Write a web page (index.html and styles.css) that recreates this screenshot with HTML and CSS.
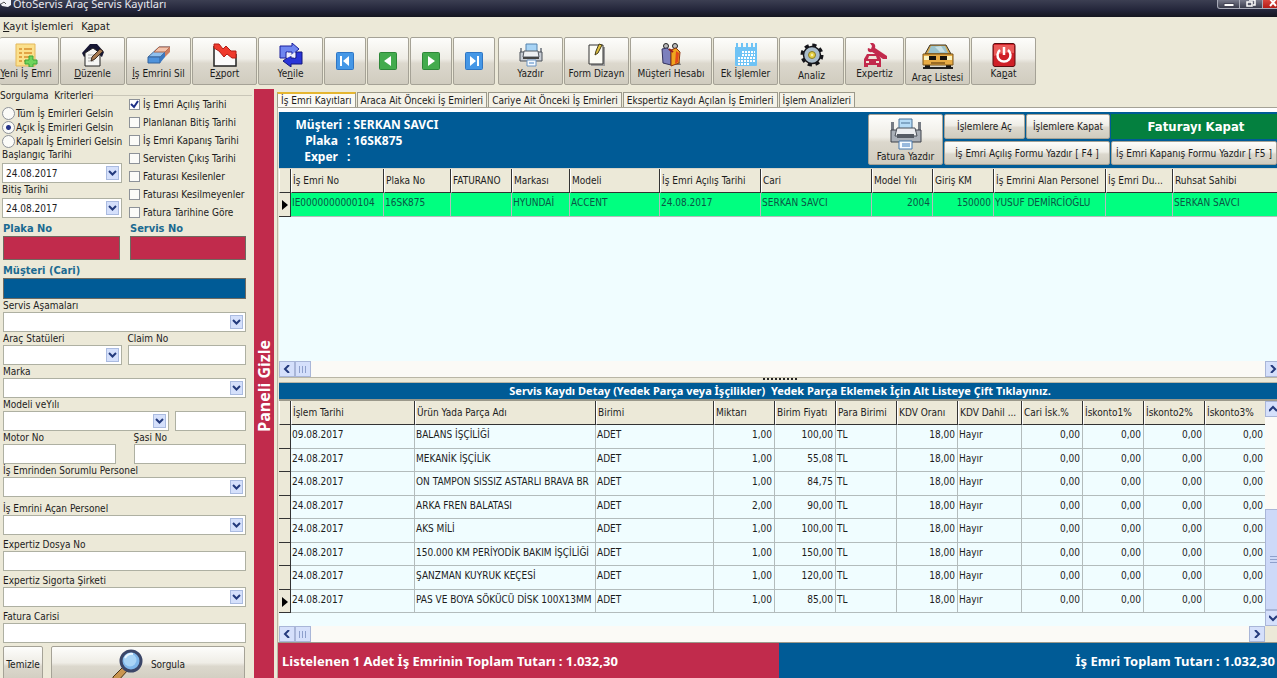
FILE: index.html
```
<!DOCTYPE html>
<html lang="tr">
<head>
    <meta charset="UTF-8">
    <meta name="viewport" content="width=device-width, initial-scale=1.0">
    <title>OtoServis Araç Servis Kayıtları</title>
    <link rel="stylesheet" href="styles.css">
</head>
<body>
    <header class="titlebar">
        <svg class="title-icon" width="12" height="8" viewBox="0 0 12 8"><path d="M0 0h11v5l-3 2-6-1-2-3z" fill="#f4f4f8"/><path d="M1 4l3-2 2 2" stroke="#555" fill="none"/></svg>
        <span class="title-text">OtoServis Araç Servis Kayıtları</span>
        <div class="window-buttons">
            <button class="win-btn" aria-label="Simge durumuna küçült"><svg width="22" height="8" viewBox="0 0 22 8"><path d="M6 3.500h10v3H6z" fill="#fff" stroke="#445"/></svg></button>
            <button class="win-btn" aria-label="Önceki boyut"><svg width="22" height="8" viewBox="0 0 22 8"><path d="M9 0h6v5h-2M7 2h5v4H7z" fill="none" stroke="#fff" stroke-width="1.500"/></svg></button>
            <button class="win-btn close" aria-label="Pencereyi kapat"><svg width="18" height="8" viewBox="0 0 18 8"><path d="M7 -1l6 7M13 -1l-6 7" stroke="#fff" stroke-width="2"/></svg></button>
        </div>
    </header>

    <nav class="menubar">
        <a href="#"><u>K</u>ayıt İşlemleri</a>
        <a href="#">K<u>a</u>pat</a>
    </nav>

    <div class="toolbar">
        <button class="tool first">
            <svg width="24" height="24" viewBox="0 0 24 24"><path d="M2 1h19v22H2z" fill="#fbe08c" stroke="#e3b75a"/><path d="M5 6h3M10 6h8M5 10h3M10 10h8M5 14h3M10 14h6M5 18h3M10 18h3" stroke="#d98f2e" stroke-width="1.500"/><path d="M15 13h4v4h4v4h-4v3h-4v-3h-4v-4h4z" fill="#6fd45c" stroke="#3ba53a"/></svg>
            <span><u>Y</u>eni İş Emri</span>
        </button>
        <button class="tool w64">
            <svg width="24" height="24" viewBox="0 0 24 24"><path d="M1 10L9 1h7l7 8-2 5-9-7-9 7z" fill="#171733"/><path d="M4 10l8-5 7 5v13H4z" fill="#f6f6f4" stroke="#222"/><path d="M7 12h6M7 15h8M7 18h6" stroke="#aaa"/><path d="M10 18l1-4 8-8 3 2-8 8z" fill="#a77b52" stroke="#3a2a20"/></svg>
            <span><u>D</u>üzenle</span>
        </button>
        <button class="tool w64">
            <svg width="24" height="24" viewBox="0 0 24 24"><path d="M1 14L12 4h11L13 14z" fill="#8fc0ee" stroke="#4b6f9c"/><path d="M7 9l5-5h11l-5 5z" fill="#f3c3ac" stroke="#a8654b"/><path d="M1 14h12v6H1z" fill="#4f93dc" stroke="#35629b"/><path d="M13 14l5-5v5l-5 6z" fill="#3c78c0"/><path d="M18 9l5-5v5l-5 5z" fill="#cf7f62"/></svg>
            <span><u>İ</u>ş Emrini Sil</span>
        </button>
        <button class="tool w64">
            <svg width="24" height="24" viewBox="0 0 24 24"><path d="M1 3v20h22V11" fill="#fbfbfb" stroke="#222" stroke-width="1.500"/><path d="M1 1h5l4 5 3-3 5 5h5v7h-4l-5-4-3 3-5-6-5-3z" fill="#ef3a2c" stroke="#b31c14"/></svg>
            <span>E<u>x</u>port</span>
        </button>
        <button class="tool w64">
            <svg width="24" height="24" viewBox="0 0 24 24"><path d="M1 15V3h12V0l7 6-7 6V9H7v6z" fill="#6f86f0" stroke="#1a1f9c"/><path d="M23 9v12H12v3l-8-6 8-6v3h5V9z" fill="#2a35d8" stroke="#12167c"/><path d="M8 9l4 3 4-3v6l-4-2-4 2z" fill="#eef"/></svg>
            <span>Ye<u>n</u>ile</span>
        </button>
        <button class="tool nav" aria-label="İlk kayıt"><svg width="18" height="18" viewBox="0 0 18 18"><rect x=".5" y=".5" width="17" height="17" rx="1" fill="#4597e6" stroke="#2f76c4"/><path d="M4 4h2v10H4zM13 4v10L7 9z" fill="#fff"/></svg></button>
        <button class="tool nav" aria-label="Önceki kayıt"><svg width="18" height="18" viewBox="0 0 18 18"><rect x=".5" y=".5" width="17" height="17" rx="1" fill="#43ab4d" stroke="#2d8738"/><path d="M12 4v10L5 9z" fill="#fff"/></svg></button>
        <button class="tool nav" aria-label="Sonraki kayıt"><svg width="18" height="18" viewBox="0 0 18 18"><rect x=".5" y=".5" width="17" height="17" rx="1" fill="#43ab4d" stroke="#2d8738"/><path d="M6 4v10l7-5z" fill="#fff"/></svg></button>
        <button class="tool nav last" aria-label="Son kayıt"><svg width="18" height="18" viewBox="0 0 18 18"><rect x=".5" y=".5" width="17" height="17" rx="1" fill="#4597e6" stroke="#2f76c4"/><path d="M12 4h2v10h-2zM5 4v10l6-5z" fill="#fff"/></svg></button>
        <button class="tool w64">
            <svg width="24" height="24" viewBox="0 0 24 24"><path d="M1 5h2v5H1zM21 5h2v5h-2z" fill="#8b9097"/><path d="M7 1h11v9H7z" fill="#a8d4f5" stroke="#5482ad"/><path d="M1 9h22v9H1z" fill="#c9ced6" stroke="#4b5058"/><path d="M5 8h14l1 6H4z" fill="#eef0f3" stroke="#555a63"/><path d="M4 15h16" stroke="#444" stroke-width="2"/><path d="M8 17h9v6H8z" fill="#f5faff" stroke="#6a93c0"/><path d="M10 20h5" stroke="#4a84c4"/></svg>
            <span>Yazdır</span>
        </button>
        <button class="tool w64">
            <svg width="24" height="24" viewBox="0 0 24 24"><path d="M6 4h14v19H6z" fill="#999"/><path d="M4 2h14v19H4z" fill="#fcfcf6" stroke="#333"/><path d="M10 12l1-4 3-7 3 1-4 8z" fill="#e2c443" stroke="#443c18"/></svg>
            <span>Form Dizayn</span>
        </button>
        <button class="tool w80">
            <svg width="24" height="24" viewBox="0 0 24 24"><path d="M15 22l7 0-2-4z" fill="#777"/><circle cx="7" cy="3" r="2.500" fill="#bbb" stroke="#222"/><circle cx="16" cy="3" r="2.500" fill="#bbb" stroke="#222"/><path d="M3 6l5-1 4 3v14l-8-2z" fill="#7c80bd" stroke="#33335f"/><path d="M12 7l5-2 4 4-1 11-8 3z" fill="#f0a51e" stroke="#8d3510"/><path d="M17 8l3 2-1 9-3 2z" fill="#e34a1c"/><path d="M10 6l4 3" stroke="#9c1d1d" stroke-width="2"/></svg>
            <span>Müşteri Hesabı</span>
        </button>
        <button class="tool w64">
            <svg width="24" height="24" viewBox="0 0 24 24"><path d="M1 4h22v18a1 1 0 0 1-1 1H2a1 1 0 0 1-1-1z" fill="#6fc3f5"/><path d="M3 0v5M8 0v5M13 0v5M18 0v5M22 0v5" stroke="#6fc3f5" stroke-width="2"/><path d="M8 9h13M8 12h13M4 15h17M4 18h17M4 21h12" stroke="#fff" stroke-width="2" stroke-dasharray="2 1"/></svg>
            <span>Ek İşlemler</span>
        </button>
        <button class="tool w64">
            <svg width="24" height="24" viewBox="0 0 24 24"><circle cx="12" cy="12" r="9.500" fill="none" stroke="#15151a" stroke-width="4" stroke-dasharray="4 3.460"/><circle cx="12" cy="12" r="8.500" fill="#a9bccb" stroke="#15151a" stroke-width="1.500"/><circle cx="12" cy="12" r="3.500" fill="#e5cf42" stroke="#8b7c24"/><circle cx="12" cy="12" r="1.200" fill="#f8f0b0"/></svg>
            <span class="gap-1">Analiz</span>
        </button>
        <button class="tool w58">
            <svg width="24" height="24" viewBox="0 0 24 24"><path d="M7 0c4-1 6 2 5 5l12 8v3h-4L9 9C6 10 4 8 5 5l3 1 1-3z" fill="#c22a4c"/><path d="M4 11h11l3 5v8h-4v-2H5v2H1v-8z" fill="#c22a4c"/><path d="M6 13h7l1 3H5z" fill="#eee6da"/><path d="M3 19h3M13 19h3" stroke="#eee6da" stroke-width="2"/></svg>
            <span>Expertiz</span>
        </button>
        <button class="tool w64">
            <svg width="32" height="26" viewBox="0 0 32 26"><path d="M1 24h30v2H1z" fill="#222"/><path d="M3 19h5v6H3zM24 19h5v6h-5z" fill="#171717"/><path d="M8 2h16l5 9H3z" fill="#d7a64a" stroke="#3b3526"/><path d="M9 3h14l3 7H6z" fill="#9cc3cb"/><path d="M13 4l5 5h5l-4-6z" fill="#c9e0e2"/><path d="M1 11h30v11H1z" fill="#e8ac45" stroke="#7a5418"/><path d="M7 13h18v4H7z" fill="#16130c"/><path d="M14 13h4v4h-4z" fill="#e8ac45"/><path d="M2 13h5v4H2zM25 13h5v4h-5z" fill="#fbf3bf"/><path d="M9 20h14" stroke="#9b6b23" stroke-width="2"/></svg>
            <span class="gap-1">Araç Listesi</span>
        </button>
        <button class="tool w64">
            <svg width="24" height="24" viewBox="0 0 24 24"><rect x="1" y=".5" width="22" height="23" rx="2" fill="#cf2027" stroke="#5b0d10"/><path d="M2 2h20v8Q12 8 2 13z" fill="#ea5a58"/><path d="M8 7a6.500 6.500 0 1 0 8 0" fill="none" stroke="#fff" stroke-width="2.500"/><path d="M12 4v8" stroke="#fff" stroke-width="2.500"/></svg>
            <span>Ka<u>p</u>at</span>
        </button>
    </div>

    <div class="workspace">
        <form class="search-panel">
            <fieldset class="criteria">
                <legend>Sorgulama&nbsp; Kriterleri</legend>
                <div class="criteria-left">
                    <label class="radio"><input type="radio" name="durum">Tüm İş Emirleri Gelsin</label>
                    <label class="radio"><input type="radio" name="durum" checked>Açık İş Emirleri Gelsin</label>
                    <label class="radio"><input type="radio" name="durum">Kapalı İş Emirleri Gelsin</label>
                    <div class="field date">
                        <label for="baslangic">Başlangıç Tarihi</label>
                        <select id="baslangic"><option>24.08.2017</option></select>
                    </div>
                    <div class="field date">
                        <label for="bitis">Bitiş Tarihi</label>
                        <select id="bitis"><option>24.08.2017</option></select>
                    </div>
                </div>
                <div class="criteria-right">
                    <label class="check"><input type="checkbox" checked>İş Emri Açılış Tarihi</label>
                    <label class="check"><input type="checkbox">Planlanan Bitiş Tarihi</label>
                    <label class="check"><input type="checkbox">İş Emri Kapanış Tarihi</label>
                    <label class="check"><input type="checkbox">Servisten Çıkış Tarihi</label>
                    <label class="check"><input type="checkbox">Faturası Kesilenler</label>
                    <label class="check"><input type="checkbox">Faturası Kesilmeyenler</label>
                    <label class="check"><input type="checkbox">Fatura Tarihine Göre</label>
                </div>
            </fieldset>

            <div class="row key-row">
                <div class="key-field"><label for="plaka">Plaka No</label><input id="plaka" class="red" type="text"></div>
                <div class="key-field"><label for="servis">Servis No</label><input id="servis" class="red" type="text"></div>
            </div>
            <div class="key-field wide"><label for="musteri">Müşteri (Cari)</label><input id="musteri" class="blue" type="text"></div>

            <div class="fields">
                <div class="field"><label for="asama">Servis Aşamaları</label><select id="asama"><option></option></select></div>
                <div class="row even">
                    <div class="field"><label for="statu">Araç Statüleri</label><select id="statu"><option></option></select></div>
                    <div class="field"><label for="claim">Claim No</label><input id="claim" type="text"></div>
                </div>
                <div class="field"><label for="marka">Marka</label><select id="marka"><option></option></select></div>
                <div class="row model">
                    <div class="field"><label for="model">Modeli veYılı</label><select id="model"><option></option></select></div>
                    <div class="field"><input id="yil" type="text" aria-label="Yılı"></div>
                </div>
                <div class="row motor">
                    <div class="field"><label for="motor">Motor No</label><input id="motor" type="text"></div>
                    <div class="field"><label for="sasi">Şasi No</label><input id="sasi" type="text"></div>
                </div>
                <div class="field"><label for="sorumlu">İş Emrinden Sorumlu Personel</label><select id="sorumlu"><option></option></select></div>
            </div>
            <div class="fields loose">
                <div class="field"><label for="acan">İş Emrini Açan Personel</label><select id="acan"><option></option></select></div>
                <div class="field"><label for="dosya">Expertiz Dosya No</label><input id="dosya" type="text"></div>
                <div class="field"><label for="sigorta">Expertiz Sigorta Şirketi</label><select id="sigorta"><option></option></select></div>
                <div class="field"><label for="fatura">Fatura Carisi</label><input id="fatura" type="text"></div>
            </div>

            <div class="actions">
                <button type="reset" class="btn clear">Temizle</button>
                <button type="button" class="btn query">
                    <svg width="32" height="32" viewBox="0 0 32 32"><path d="M2 28L13 17l4 4L7 32H2z" fill="#c99550" stroke="#4a3216"/><circle cx="20" cy="12" r="10" fill="#7eb6ea" stroke="#3b4668" stroke-width="3"/><circle cx="19" cy="11" r="6.500" fill="#a9d4f6"/><path d="M14 9q3-5 8-4" stroke="#eaf6ff" stroke-width="2" fill="none"/></svg>
                    Sorgula
                </button>
            </div>
        </form>

        <button class="hide-panel"><span>Paneli Gizle</span></button>

        <main class="content">
            <div class="tabs">
                <button class="tab active">İş Emri Kayıtları</button>
                <button class="tab">Araca Ait Önceki İş Emirleri</button>
                <button class="tab">Cariye Ait Önceki İş Emirleri</button>
                <button class="tab">Ekspertiz Kaydı Açılan İş Emirleri</button>
                <button class="tab">İşlem Analizleri</button>
            </div>

            <div class="page">
                <section class="order-head">
                    <dl class="order-info">
                        <dt>Müşteri</dt><dd>: SERKAN SAVCI</dd>
                        <dt class="short">Plaka</dt><dd>: 16SK875</dd>
                        <dt class="short">Exper</dt><dd>:</dd>
                    </dl>
                    <div class="order-buttons">
                        <button class="btn print">
                            <svg width="32" height="32" viewBox="0 0 32 32"><path d="M1 4h3v10H1zM28 4h3v10h-3z" fill="#777c84"/><path d="M9 1h13v12H9z" fill="#b6dcf7" stroke="#4d7396"/><path d="M11 5h9" stroke="#4d7396"/><path d="M1 12h30v12H1z" fill="#aab0b8" stroke="#3e434a"/><path d="M7 10h18l2 8H5z" fill="#eceef1" stroke="#4b5058"/><path d="M7 16h17v4H7z" fill="#555b64"/><path d="M9 23h13v8H9z" fill="#f6fbff" stroke="#4978ac"/><path d="M12 26h8M12 28h8" stroke="#3a79bd"/></svg>
                            <span>Fatura Yazdır</span>
                        </button>
                        <button class="btn open">İşlemlere Aç</button>
                        <button class="btn shut">İşlemlere Kapat</button>
                        <button class="close-invoice">Faturayı Kapat</button>
                        <button class="btn form-open">İş Emri Açılış Formu Yazdır [ F4 ]</button>
                        <button class="btn form-close">İş Emri Kapanış Formu Yazdır [ F5 ]</button>
                    </div>
                </section>

                <section class="orders">
                    <table class="grid orders-table">
                        <colgroup><col class="c12"><col class="c92"><col class="c67"><col class="c61"><col class="c58"><col class="c90"><col class="c101"><col class="c111"><col class="c61"><col class="c61"><col class="c112"><col class="c67"><col></colgroup>
                        <thead>
                            <tr><th></th><th>İş Emri No</th><th>Plaka No</th><th>FATURANO</th><th>Markası</th><th>Modeli</th><th>İş Emri Açılış Tarihi</th><th>Cari</th><th>Model Yılı</th><th>Giriş KM</th><th>İş Emrini Alan Personel</th><th>İş Emri Du...</th><th>Ruhsat Sahibi</th></tr>
                        </thead>
                        <tbody>
                            <tr><td class="mark"><svg width="6" height="10" viewBox="0 0 6 10"><path d="M0 0l6 5-6 5z"/></svg></td><td>IE0000000000104</td><td>16SK875</td><td></td><td>HYUNDAİ</td><td>ACCENT</td><td>24.08.2017</td><td>SERKAN SAVCI</td><td class="num">2004</td><td class="num">150000</td><td>YUSUF DEMİRCİOĞLU</td><td></td><td>SERKAN SAVCI</td></tr>
                        </tbody>
                    </table>
                </section>
                <div class="hscroll">
                    <button class="sb left" aria-label="Sola kaydır"></button><span class="thumb"></span><button class="sb right" aria-label="Sağa kaydır"></button>
                </div>

                <div class="splitter"><span></span></div>
                <h2 class="banner">Servis Kaydı Detay (Yedek Parça veya İşçilikler)&nbsp; Yedek Parça Eklemek İçin Alt Listeye Çift Tıklayınız.</h2>

                <section class="details">
                    <div class="details-main">
                        <table class="grid details-table">
                            <colgroup><col class="c12"><col class="c123"><col class="c181"><col class="c118"><col class="c61"><col class="c61"><col class="c61"><col class="c61"><col class="c64"><col class="c61"><col class="c61"><col class="c61"><col></colgroup>
                            <thead>
                                <tr><th></th><th>İşlem Tarihi</th><th>Ürün Yada Parça Adı</th><th>Birimi</th><th>Miktarı</th><th>Birim Fiyatı</th><th>Para Birimi</th><th>KDV Oranı</th><th>KDV Dahil ...</th><th>Cari İsk.%</th><th>İskonto1%</th><th>İskonto2%</th><th>İskonto3%</th></tr>
                            </thead>
                            <tbody>
                                <tr><td class="mark"></td><td>09.08.2017</td><td>BALANS İŞÇİLİĞİ</td><td>ADET</td><td class="num">1,00</td><td class="num">100,00</td><td>TL</td><td class="num">18,00</td><td>Hayır</td><td class="num">0,00</td><td class="num">0,00</td><td class="num">0,00</td><td class="num">0,00</td></tr>
                                <tr><td class="mark"></td><td>24.08.2017</td><td>MEKANİK İŞÇİLİK</td><td>ADET</td><td class="num">1,00</td><td class="num">55,08</td><td>TL</td><td class="num">18,00</td><td>Hayır</td><td class="num">0,00</td><td class="num">0,00</td><td class="num">0,00</td><td class="num">0,00</td></tr>
                                <tr><td class="mark"></td><td>24.08.2017</td><td>ON TAMPON SISSIZ ASTARLI BRAVA BR</td><td>ADET</td><td class="num">1,00</td><td class="num">84,75</td><td>TL</td><td class="num">18,00</td><td>Hayır</td><td class="num">0,00</td><td class="num">0,00</td><td class="num">0,00</td><td class="num">0,00</td></tr>
                                <tr><td class="mark"></td><td>24.08.2017</td><td>ARKA FREN BALATASI</td><td>ADET</td><td class="num">2,00</td><td class="num">90,00</td><td>TL</td><td class="num">18,00</td><td>Hayır</td><td class="num">0,00</td><td class="num">0,00</td><td class="num">0,00</td><td class="num">0,00</td></tr>
                                <tr><td class="mark"></td><td>24.08.2017</td><td>AKS MİLİ</td><td>ADET</td><td class="num">1,00</td><td class="num">100,00</td><td>TL</td><td class="num">18,00</td><td>Hayır</td><td class="num">0,00</td><td class="num">0,00</td><td class="num">0,00</td><td class="num">0,00</td></tr>
                                <tr><td class="mark"></td><td>24.08.2017</td><td>150.000 KM PERİYODİK BAKIM İŞÇİLİĞİ</td><td>ADET</td><td class="num">1,00</td><td class="num">150,00</td><td>TL</td><td class="num">18,00</td><td>Hayır</td><td class="num">0,00</td><td class="num">0,00</td><td class="num">0,00</td><td class="num">0,00</td></tr>
                                <tr><td class="mark"></td><td>24.08.2017</td><td>ŞANZMAN KUYRUK KEÇESİ</td><td>ADET</td><td class="num">1,00</td><td class="num">120,00</td><td>TL</td><td class="num">18,00</td><td>Hayır</td><td class="num">0,00</td><td class="num">0,00</td><td class="num">0,00</td><td class="num">0,00</td></tr>
                                <tr><td class="mark"><svg width="6" height="10" viewBox="0 0 6 10"><path d="M0 0l6 5-6 5z"/></svg></td><td>24.08.2017</td><td>PAS VE BOYA SÖKÜCÜ DİSK 100X13MM</td><td>ADET</td><td class="num">1,00</td><td class="num">85,00</td><td>TL</td><td class="num">18,00</td><td>Hayır</td><td class="num">0,00</td><td class="num">0,00</td><td class="num">0,00</td><td class="num">0,00</td></tr>
                            </tbody>
                        </table>
                    </div>
                    <div class="vscroll">
                        <button class="sb up" aria-label="Yukarı kaydır"></button>
                        <span class="vthumb"></span>
                        <button class="sb down" aria-label="Aşağı kaydır"></button>
                    </div>
                </section>
                <div class="hscroll with-corner">
                    <button class="sb left" aria-label="Sola kaydır"></button><span class="thumb"></span><button class="sb right" aria-label="Sağa kaydır"></button><span class="corner"></span>
                </div>

                <footer class="totals">
                    <div class="total-list">Listelenen 1 Adet İş Emrinin Toplam Tutarı : 1.032,30</div>
                    <div class="total-order">İş Emri Toplam Tutarı : 1.032,30</div>
                </footer>
            </div>
        </main>
    </div>
</body>
</html>
```
FILE: styles.css
```
* {
    margin: 0;
    padding: 0;
    box-sizing: border-box;
}

body {
    height: 100vh;
    display: flex;
    flex-direction: column;
    overflow: hidden;
    background: #ece9d8;
    color: #1c1c1c;
    font-family: "DejaVu Sans Condensed", "DejaVu Sans", sans-serif;
    font-size: 10px;
    line-height: 13px;
}

button,
input,
select {
    font: inherit;
    color: inherit;
    border-radius: 0;
}

a {
    color: inherit;
    text-decoration: none;
}

/* Title bar */
.titlebar {
    flex: none;
    display: flex;
    align-items: flex-start;
    height: 17px;
    background: linear-gradient(#3c3f52, #23253a 60%, #15161f);
    color: #e8e8ee;
}

.title-text {
    margin-left: 1px;
    font-family: "Noto Sans", sans-serif;
    font-size: 11px;
    line-height: 8px;
}

.window-buttons {
    display: flex;
    margin-left: auto;
}

.win-btn {
    width: 23px;
    height: 9px;
    border: 1px solid #a9abb8;
    border-top: 0;
    border-left: 0;
    background: linear-gradient(#77798a, #3a3c4c);
    overflow: hidden;
}

.win-btn svg {
    display: block;
}

.win-btn:first-child {
    border-left: 1px solid #a9abb8;
    border-bottom-left-radius: 3px;
}

.win-btn.close {
    width: 14px;
    border-right: 0;
    background: linear-gradient(#d8453c, #b41c16);
}

/* Menu */
.menubar {
    flex: none;
    display: flex;
    gap: 8px;
    height: 20px;
    padding: 3px 3px 0;
    font-size: 11px;
    line-height: 14px;
}

/* Toolbar */
.toolbar {
    flex: none;
    display: flex;
    gap: 1px;
    height: 48px;
}

.tool,
.btn {
    border: 1px solid #a5a296;
    border-radius: 2px;
    background: linear-gradient(#fdfdfb, #efede6 45%, #dcd8cd 55%, #d0ccbf);
    white-space: nowrap;
}

.tool {
    display: flex;
    flex: none;
    flex-direction: column;
    align-items: center;
    justify-content: flex-start;
    padding-top: 5px;
}

.tool svg {
    flex: none;
}

.tool.first {
    width: 59px;
    padding-right: 6px;
    border-left: 0;
}

.w58 { width: 59px; }
.w64 { width: 65px; }
.w80 { width: 82px; }

.nav {
    width: 42px;
    padding-top: 0;
    justify-content: center;
}

.nav.last {
    margin-right: 2px;
}

.gap-1 {
    margin-top: 2px;
}

/* Workspace */
.workspace {
    flex: 1;
    display: flex;
    min-height: 0;
}

.search-panel {
    flex: none;
    width: 254px;
    padding: 4px 0 0;
}

.criteria {
    display: grid;
    grid-template-columns: 127px 1fr;
    grid-template-rows: 13px 1fr;
    height: 132px;
    margin-right: 2px;
    border: 0;
    background: linear-gradient(#c9c6b8, #c9c6b8) no-repeat 92px 6px / 160px 1px;
}

.criteria legend {
    float: left;
    white-space: nowrap;
}

.criteria-left {
    grid-area: 2 / 1;
    padding: 4px 0 0 2px;
}

.criteria-right {
    grid-area: 1 / 2 / 3 / 3;
    padding: 6px 0 0 2px;
}

.radio,
.check {
    display: flex;
    align-items: center;
    white-space: nowrap;
}

.radio {
    gap: 1px;
    height: 14px;
}

.check {
    gap: 3px;
    height: 18px;
}

.radio input,
.check input {
    appearance: none;
    flex: none;
    background: #fbfbf8;
    border: 1px solid #8d9298;
}

.radio input {
    width: 13px;
    height: 13px;
    border-radius: 50%;
}

.radio input:checked {
    background: radial-gradient(circle, #27368a 2px, #fbfbf8 3px);
}

.check input {
    width: 11px;
    height: 11px;
}

.check input:checked {
    background: #fff url("data:image/svg+xml,%3Csvg xmlns='http://www.w3.org/2000/svg' viewBox='0 0 9 9'%3E%3Cpath d='M1 4l3 3 4-6' fill='none' stroke='%231c2f86' stroke-width='2'/%3E%3C/svg%3E") center / 9px 9px no-repeat;
}

.row {
    display: grid;
}

.field {
    display: flex;
    flex-direction: column;
    justify-content: flex-end;
}

.field label {
    height: 13px;
    white-space: nowrap;
}

.field input,
.field select {
    width: 100%;
    height: 20px;
    padding: 0 3px;
    border: 1px solid #aeb0a2;
    background: #fff;
}

.field select {
    appearance: none;
    background: #fff url("data:image/svg+xml,%3Csvg xmlns='http://www.w3.org/2000/svg' viewBox='0 0 13 14'%3E%3Crect x='.5' y='.5' width='12' height='13' fill='%23d5e0fb' stroke='%23aabbe0'/%3E%3Cpath d='M3 5l3.500 3.500L10 5' fill='none' stroke='%23233a7c' stroke-width='2'/%3E%3C/svg%3E") right 2px center / 13px 14px no-repeat;
}

.field.date {
    width: 120px;
}

.field.date label {
    height: 15px;
}

.key-row {
    grid-template-columns: 117px 116px;
    gap: 10px;
    padding-left: 3px;
}

.key-field {
    display: flex;
    flex-direction: column;
}

.key-field label {
    height: 15px;
    font-size: 11px;
    font-weight: bold;
    line-height: 15px;
    color: #1b6a91;
}

.key-field input {
    width: 100%;
    height: 24px;
    border: 1px solid #6f6a60;
}

.key-field .red {
    background: #c12b4c;
}

.key-field .blue {
    height: 21px;
    background: #005b96;
}

.key-field.wide {
    width: 243px;
    margin: 3px 0 0 3px;
}

.fields {
    display: flex;
    flex-direction: column;
    width: 243px;
    margin-left: 3px;
}

.fields.loose {
    gap: 3px;
    padding-top: 5px;
}

.row.even {
    grid-template-columns: 1fr 1fr;
    gap: 6px;
}

.row.model {
    grid-template-columns: 7fr 3fr;
    gap: 6px;
}

.row.motor {
    grid-template-columns: 1fr 1fr;
    gap: 18px;
}

.actions {
    display: flex;
    gap: 8px;
    width: 245px;
    padding: 3px 0 0 3px;
}

.actions .btn {
    height: 37px;
}

.clear {
    width: 40px;
}

.query {
    flex: 1;
    display: flex;
    align-items: center;
    justify-content: center;
    gap: 8px;
}

/* Vertical strip */
.hide-panel {
    flex: none;
    width: 20px;
    margin: 4px 3px 0 0;
    padding-top: 8px;
    border: 0;
    background: #c12b4c;
    color: #fff;
    font-family: "Noto Sans", sans-serif;
    font-size: 16px;
    font-weight: bold;
    line-height: 20px;
}

.hide-panel span {
    writing-mode: vertical-rl;
    rotate: 180deg;
}

/* Right side, runs a little past the window edge */
.content {
    flex: 1;
    display: flex;
    flex-direction: column;
    min-width: 0;
    margin-right: -4px;
    padding-top: 7px;
}

.tabs {
    display: flex;
    gap: 1px;
    height: 15px;
}

.tab {
    padding: 0 3px;
    border: 1px solid #9b998b;
    border-bottom: 0;
    background: #f4f2e8;
    white-space: nowrap;
}

.tab.active {
    border-top: 2px solid #e5b631;
    background: #fbfaf4;
}

.page {
    flex: 1;
    display: flex;
    flex-direction: column;
    min-height: 0;
    padding: 4px 0 0 1px;
    border-top: 1px solid #a5a296;
    border-left: 1px solid #b9b6a6;
    background: linear-gradient(#fff, #fff) no-repeat 0 0 / 100% 4px;
}

.order-head {
    flex: none;
    display: flex;
    justify-content: space-between;
    height: 56px;
    background: #005b96;
    color: #fff;
}

.order-info {
    display: grid;
    grid-template-columns: 63px auto;
    grid-auto-rows: 16px;
    column-gap: 5px;
    padding-top: 5px;
    font-family: "Noto Sans", sans-serif;
    font-size: 12px;
    font-weight: bold;
    line-height: 16px;
}

.order-info dt {
    text-align: right;
}

.order-info .short {
    padding-right: 4px;
}

.order-buttons {
    display: grid;
    grid-template-columns: 75px 81px 84px 170px;
    grid-template-rows: 25px 24px;
    gap: 2px 1px;
    padding-top: 2px;
    color: #1c1c1c;
}

.order-buttons .print {
    grid-row: span 2;
    display: flex;
    flex-direction: column;
    align-items: center;
    padding-top: 3px;
}

.order-buttons .form-open {
    grid-column: 2 / span 2;
}

.order-buttons .form-close {
    margin-right: 4px;
}

.close-invoice {
    border: 0;
    background: #04803f;
    color: #fff;
    font-size: 13px;
    font-weight: bold;
}

/* Grids */
.grid {
    width: 100%;
    table-layout: fixed;
    border-collapse: separate;
    border-spacing: 0;
}

.c12 { width: 12px; }
.c58 { width: 58px; }
.c61 { width: 61px; }
.c64 { width: 64px; }
.c67 { width: 67px; }
.c90 { width: 90px; }
.c92 { width: 93px; }
.c101 { width: 101px; }
.c111 { width: 111px; }
.c112 { width: 112px; }
.c118 { width: 118px; }
.c123 { width: 124px; }
.c181 { width: 181px; }

.grid th {
    height: 24px;
    padding: 0 1px;
    border-right: 1px solid #333;
    border-bottom: 1px solid #333;
    border-left: 1px solid #fff;
    background: #ece9d8;
    font-weight: normal;
    text-align: left;
    white-space: nowrap;
}

.grid td {
    height: 24px;
    padding: 3px 2px 0 1px;
    border-right: 1px solid #b3bcbc;
    border-bottom: 1px solid #b3bcbc;
    vertical-align: top;
    white-space: nowrap;
    overflow: hidden;
}

.details-table tr:nth-child(even) td {
    height: 23px;
}

.grid .num {
    text-align: right;
}

.grid .mark {
    padding: 7px 0 0 3px;
    border-right-color: #333;
    border-bottom-color: #333;
    background: #ece9d8;
}

.mark svg {
    display: block;
}

.orders,
.details {
    background: #f0fdff;
}

.orders {
    flex: 1;
    min-height: 0;
    border-top: 1px solid #d8d5c8;
    overflow: hidden;
}

.orders-table td {
    background: #00ff80;
    color: #0b5545;
}

.details {
    flex: none;
    display: flex;
    height: 225px;
}

.details-main {
    flex: 1;
    min-width: 0;
}

.details-main th:last-child,
.details-main td:last-child {
    border-right-width: 0;
}

/* Scroll bars */
.hscroll {
    flex: none;
    display: flex;
    height: 16px;
    background: #fbfaf6;
}

.sb {
    flex: none;
    width: 16px;
    height: 16px;
    border: 1px solid #a9b6d8;
    background: #d5e0fb url("data:image/svg+xml,%3Csvg xmlns='http://www.w3.org/2000/svg' viewBox='0 0 8 8'%3E%3Cpath d='M6 0L2 4l4 4' fill='none' stroke='%23233a7c' stroke-width='2'/%3E%3C/svg%3E") center / 8px 8px no-repeat;
}

.sb.right {
    margin-left: auto;
    rotate: 180deg;
}

.sb.up {
    rotate: 90deg;
}

.sb.down {
    rotate: -90deg;
}

.thumb {
    width: 16px;
    border: 1px solid #a9b6d8;
    background: repeating-linear-gradient(90deg, #8ea0cc 0 1px, transparent 1px 3px) center / 9px 7px no-repeat, #d5e0fb;
}

.corner {
    width: 16px;
    background: #ece9d8;
}

.vscroll {
    flex: none;
    display: flex;
    flex-direction: column;
    width: 16px;
    background: #fbfaf6;
}

.vthumb {
    height: 101px;
    margin-top: auto;
    border: 1px solid #a9b6d8;
    background: repeating-linear-gradient(#8ea0cc 0 1px, transparent 1px 3px) center / 7px 8px no-repeat, #cdd9f8;
}

.splitter {
    flex: none;
    height: 6px;
    border-top: 1px solid #b9b6a6;
    border-bottom: 1px solid #b9b6a6;
}

.splitter span {
    display: block;
    width: 34px;
    height: 2px;
    margin: 0 auto;
    background: repeating-linear-gradient(90deg, #222 0 2px, transparent 2px 4px);
}

.banner {
    flex: none;
    height: 18px;
    border-bottom: 2px solid #9b998b;
    background: #005b96;
    color: #fff;
    font-family: "Noto Sans", sans-serif;
    font-size: 11px;
    font-weight: bold;
    line-height: 16px;
    text-align: center;
}

/* Totals */
.totals {
    flex: none;
    display: flex;
    height: 36px;
    margin: 0 0 0 -1px;
    border-top: 1px solid #9b998b;
    color: #fff;
    font-family: "Noto Sans", sans-serif;
    font-size: 13px;
    font-weight: bold;
    line-height: 36px;
}

.total-list {
    flex: 1;
    padding-left: 4px;
    background: #c12b4c;
}

.total-order {
    flex: 1;
    padding-right: 6px;
    background: #005b96;
    text-align: right;
}
```
